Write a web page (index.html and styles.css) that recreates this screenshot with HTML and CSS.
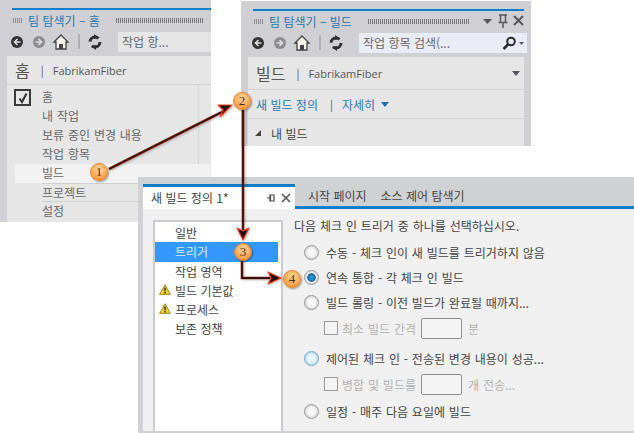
FILE: index.html
```html
<!DOCTYPE html>
<html lang="ko">
<head>
    <meta charset="UTF-8">
    <title>새 빌드 정의</title>
    <link rel="stylesheet" href="styles.css">
</head>
<body>
    <div class="canvas">

        <!-- Team Explorer: home -->
        <div class="panel panel-home">
            <div class="titlebar">
                <span class="grip"></span>
                <span class="title">팀 탐색기 – 홈</span>
                <span class="dots"></span>
            </div>
            <div class="toolbar">
                <svg class="tool-icons" width="92" height="18" viewBox="0 0 92 18">
                    <use href="#tools"/>
                </svg>
                <div class="search">작업 항...</div>
            </div>
            <div class="content">
                <div class="page-head">
                    <span class="page-title">홈</span>
                    <span class="sep">|</span>
                    <span class="project">FabrikamFiber</span>
                </div>
                <div class="nav-wrap">
                    <span class="check-box">
                        <svg width="12" height="12" viewBox="0 0 12 12"><path d="M2.5 6.5 L5 10 L9.5 1.5" fill="none" stroke="#333" stroke-width="2"/></svg>
                    </span>
                    <ul class="nav">
                        <li>홈</li>
                        <li>내 작업</li>
                        <li>보류 중인 변경 내용</li>
                        <li>작업 항목</li>
                        <li class="hot">빌드</li>
                        <li class="ruled">프로젝트</li>
                        <li>설정</li>
                    </ul>
                </div>
            </div>
        </div>

        <!-- Team Explorer: builds -->
        <div class="panel panel-builds">
            <div class="titlebar">
                <span class="grip"></span>
                <span class="title">팀 탐색기 – 빌드</span>
                <span class="dots"></span>
                <svg class="win-icons" width="48" height="14" viewBox="0 0 48 14">
                    <path d="M7 5 H16 L11.5 10 Z" fill="#55565e"/>
                    <path d="M23 1 H31 M24.5 1 V8 M29.5 1 V8 M22.5 8.5 H31.5 M27 8.5 V14" fill="none" stroke="#55565e" stroke-width="1.5"/>
                    <path d="M38 2 L47 11 M47 2 L38 11" fill="none" stroke="#55565e" stroke-width="2"/>
                </svg>
            </div>
            <div class="toolbar">
                <svg class="tool-icons" width="92" height="18" viewBox="0 0 92 18">
                    <use href="#tools"/>
                </svg>
                <div class="search search-wide">
                    <span>작업 항목 검색(...</span>
                    <svg width="22" height="14" viewBox="0 0 22 14">
                        <circle cx="9" cy="5.5" r="3.8" fill="none" stroke="#2c2c2c" stroke-width="2"/>
                        <path d="M6 8.5 L1.5 13" stroke="#2c2c2c" stroke-width="2.6"/>
                        <path d="M17 6 H22 L19.5 9 Z" fill="#55565e"/>
                    </svg>
                </div>
            </div>
            <div class="content">
                <div class="page-head page-head-tall">
                    <span class="page-title">빌드</span>
                    <span class="sep">|</span>
                    <span class="project">FabrikamFiber</span>
                    <span class="caret"></span>
                </div>
                <div class="links">
                    <span class="link">새 빌드 정의</span>
                    <span class="sep">|</span>
                    <span class="link">자세히</span>
                    <span class="caret caret-blue"></span>
                </div>
                <div class="section-head">
                    <span class="corner"></span>
                    <span>내 빌드</span>
                </div>
            </div>
        </div>

        <!-- build definition editor -->
        <div class="editor">
            <div class="tabs">
                <div class="tab tab-active">
                    <span class="tab-name">새 빌드 정의 1*</span>
                    <svg width="26" height="12" viewBox="0 0 26 12">
                        <path d="M2 6 H5 M5 3 H9 V9 H5 Z M5.5 3 V9" fill="none" stroke="#444" stroke-width="1.2"/>
                        <path d="M17 2 L25 10 M25 2 L17 10" fill="none" stroke="#555" stroke-width="1.6"/>
                    </svg>
                </div>
                <div class="tab">시작 페이지</div>
                <div class="tab">소스 제어 탐색기</div>
            </div>
            <div class="editor-body">
                <ul class="steps">
                    <li>일반</li>
                    <li class="selected">트리거</li>
                    <li>작업 영역</li>
                    <li><svg class="warn" width="12" height="11" viewBox="0 0 12 11"><use href="#warn"/></svg>빌드 기본값</li>
                    <li><svg class="warn" width="12" height="11" viewBox="0 0 12 11"><use href="#warn"/></svg>프로세스</li>
                    <li>보존 정책</li>
                </ul>
                <div class="triggers">
                    <p class="lead">다음 체크 인 트리거 중 하나를 선택하십시오.</p>
                    <div class="option"><span class="radio"></span>수동 - 체크 인이 새 빌드를 트리거하지 않음</div>
                    <div class="option"><span class="radio radio-on"></span>연속 통합 - 각 체크 인 빌드</div>
                    <div class="option"><span class="radio"></span>빌드 롤링 - 이전 빌드가 완료될 때까지...</div>
                    <div class="sub"><span class="box"></span><span class="sub-label">최소 빌드 간격</span><span class="field"></span>분</div>
                    <div class="option option-gap"><span class="radio radio-hover"></span>제어된 체크 인 - 전송된 변경 내용이 성공...</div>
                    <div class="sub"><span class="box"></span><span class="sub-label">병합 및 빌드를</span><span class="field"></span>개 전송...</div>
                    <div class="option option-last"><span class="radio"></span>일정 - 매주 다음 요일에 빌드</div>
                </div>
            </div>
        </div>

        <!-- callout arrows -->
        <svg class="arrows" width="634" height="433" viewBox="0 0 634 433">
            <defs>
                <g id="tools">
                    <circle cx="7" cy="9" r="6" fill="#333"/>
                    <path d="M10.5 9 H5 M7.5 6 L4.5 9 L7.5 12" fill="none" stroke="#e0e0e4" stroke-width="1.6"/>
                    <circle cx="29" cy="9" r="6" fill="#8c8c90"/>
                    <path d="M25.5 9 H31 M28.5 6 L31.5 9 L28.5 12" fill="none" stroke="#e0e0e4" stroke-width="1.6"/>
                    <path d="M44 9 L51 2 L58 9 H56 V16 H46 V9 Z" fill="#f3f1ea" stroke="#444" stroke-width="1.3"/>
                    <rect x="49" y="11" width="4" height="5" fill="#444"/>
                    <path d="M69 1 V16" stroke="#9b9ba0" stroke-width="1.2"/>
                    <circle cx="85" cy="9" r="5" fill="none" stroke="#2e2e33" stroke-width="3" stroke-dasharray="11 4.7"/>
                    <path d="M84 1 L88 4 L84 6 Z M86 17 L82 14 L86 12 Z" fill="#2e2e33"/>
                </g>
                <g id="warn">
                    <path d="M6 .8 L11.4 10.4 H.6 Z" fill="#f6d332" stroke="#8a7414" stroke-width=".8"/>
                    <path d="M6 3.4 V7.2 M6 8 V9.4" stroke="#222" stroke-width="1.4"/>
                </g>
                <filter id="soft" x="-10%" y="-10%" width="120%" height="120%">
                    <feDropShadow dx="1" dy="1" stdDeviation="1" flood-color="#000" flood-opacity=".25"/>
                </filter>
            </defs>
            <g filter="url(#soft)">
                <path class="line-red" d="M109 169 L224 111"/>
                <path class="line-dark" d="M109 169 L224 111"/>
                <path class="head" d="M232 105 L218 105 L223 110 L220 117 Z"/>
                <path class="line-red" d="M243 110 V230"/>
                <path class="line-dark" d="M243 110 V230"/>
                <path class="head" d="M243 240 L237 228 L243 231 L249 228 Z"/>
                <path class="line-red" d="M242 258 V278 H270"/>
                <path class="line-dark" d="M242 258 V278 H270"/>
                <path class="head" d="M281 278 L268 272 L271 278 L268 284 Z"/>
            </g>
        </svg>

        <span class="badge badge-1">1</span>
        <span class="badge badge-2">2</span>
        <span class="badge badge-3">3</span>
        <span class="badge badge-4">4</span>
    </div>
</body>
</html>
```

FILE: styles.css
```css
/* Global Styles */
* {
    margin: 0;
    padding: 0;
    box-sizing: border-box;
}

body {
    background: #ffffff;
    font-family: 'Noto Sans CJK KR', 'Noto Sans', sans-serif;
    font-size: 12px;
    color: #444;
}

ul {
    list-style: none;
}

.canvas {
    position: relative;
    width: 634px;
    height: 433px;
    overflow: hidden;
}

/* Team Explorer panels */
.panel {
    position: absolute;
    background-color: #d0cfd3;
    padding-left: 7px;
    overflow: hidden;
}

.panel-home {
    left: 0;
    top: 0;
    width: 211px;
    height: 222px;
    padding-top: 8px;
}

.panel-builds {
    left: 241px;
    top: 1px;
    width: 290px;
    height: 145px;
    padding-top: 8px;
    padding-right: 7px;
}

.titlebar {
    display: flex;
    align-items: center;
    height: 22px;
    margin-left: 5px;
    border-top: 2px solid #0f7dc8;
}

.grip {
    width: 10px;
    height: 5px;
    margin-left: 1px;
    margin-right: 5px;
    background: repeating-linear-gradient(to right, #8d8d96 0 1px, transparent 1px 2px);
}

.title {
    color: #2a78ae;
    font-size: 12px;
    white-space: nowrap;
}

.dots {
    flex: 1;
    height: 5px;
    margin-left: 16px;
    margin-right: 7px;
    background: repeating-linear-gradient(to right, #77777f 0 1px, transparent 1px 2px);
}

.win-icons {
    flex: none;
}

.toolbar {
    display: flex;
    align-items: center;
    height: 21px;
    margin-top: 1px;
    margin-bottom: 4px;
}

.tool-icons {
    flex: none;
    margin-left: 3px;
    margin-right: 16px;
}

.search {
    flex: 1;
    height: 20px;
    line-height: 20px;
    padding-left: 4px;
    background-color: #e5e5e6;
    color: #666;
}

.search-wide {
    display: flex;
    flex: none;
    width: 168px;
    justify-content: space-between;
    align-items: center;
    padding-right: 3px;
    background-color: #e9ebf5;
}

.content {
    background-color: #e6e6e6;
}

.panel-home .content {
    height: 167px;
}

.panel-builds .content {
    height: 90px;
}

/* Page headers */
.page-head {
    display: flex;
    align-items: center;
    height: 29px;
    padding-left: 8px;
    border-bottom: 1px solid #d0d0d0;
}

.page-head-tall {
    height: 33px;
    padding-right: 4px;
}

.page-title {
    font-size: 16px;
    color: #555;
}

.sep {
    margin-left: 11px;
    margin-right: 9px;
    color: #555;
    font-size: 11px;
}

.project {
    flex: 1;
    font-family: 'Open Sans', sans-serif;
    font-size: 11px;
    color: #555;
}

.caret {
    width: 0;
    height: 0;
    border-left: 4px solid transparent;
    border-right: 4px solid transparent;
    border-top: 5px solid #55565e;
}

.caret-blue {
    margin-left: 6px;
    border-top-color: #1d6fa8;
}

.links {
    display: flex;
    align-items: center;
    height: 29px;
    padding-left: 8px;
    border-bottom: 1px solid #d0d0d0;
}

.links .sep {
    margin-left: 12px;
}

.link {
    color: #2a78ae;
}

.section-head {
    display: flex;
    align-items: center;
    height: 28px;
    padding-left: 7px;
    color: #444;
}

.corner {
    width: 0;
    height: 0;
    margin-right: 10px;
    border-left: 6px solid transparent;
    border-bottom: 6px solid #444;
}

/* Home navigation */
.nav-wrap {
    display: flex;
    height: 138px;
}

.check-box {
    display: flex;
    flex: none;
    justify-content: center;
    align-items: center;
    width: 17px;
    height: 17px;
    margin-top: 4px;
    margin-left: 7px;
    border: 2px solid #3a3a3a;
}

.nav {
    flex: 1;
    margin-left: 11px;
    padding-top: 3px;
    margin-right: 12px;
    border-right: 1px solid #d6d6d6;
}

.nav li {
    height: 19px;
    line-height: 17px;
    color: #666;
    word-spacing: 0.5px;
    white-space: nowrap;
}

.nav .hot {
    margin-left: -27px;
    margin-right: -12px;
    padding-left: 27px;
    background-color: #f2f2f2;
}

.nav .ruled {
    border-top: 1px solid #d0d0d0;
    border-bottom: 1px solid #d0d0d0;
}

/* Editor window */
.editor {
    position: absolute;
    left: 138px;
    top: 177px;
    width: 496px;
    height: 256px;
    padding-left: 5px;
    background-color: #d0d1d3;
}

.tabs {
    display: flex;
    height: 32px;
    padding-top: 7px;
    border-bottom: 3px solid #0f7dc8;
}

.tab {
    height: 22px;
    line-height: 24px;
    margin-right: 14px;
    color: #444;
    white-space: nowrap;
}

.tab-active {
    display: flex;
    justify-content: space-between;
    align-items: center;
    width: 152px;
    height: 25px;
    margin-right: 13px;
    padding-left: 8px;
    padding-right: 4px;
    border-top: 3px solid #0f7dc8;
    background-color: #ffffff;
}

.editor-body {
    display: flex;
    height: 222px;
    padding-top: 11px;
    padding-left: 10px;
    background-color: #f0f0f0;
}

.steps {
    flex: none;
    width: 130px;
    height: 211px;
    padding-top: 1px;
    padding-right: 3px;
    border: 2px solid #c9cbd0;
    border-bottom: none;
    background-color: #ffffff;
    color: #444;
}

.steps li {
    position: relative;
    height: 19px;
    line-height: 19px;
    padding-left: 20px;
}

.steps .selected {
    height: 20px;
    background-color: #3399ff;
    color: #d8ecff;
}

.warn {
    position: absolute;
    left: 4px;
    top: 3px;
}

.triggers {
    flex: 1;
    padding-left: 11px;
    color: #444;
}

.lead {
    height: 14px;
    line-height: 14px;
    margin-top: -1px;
    margin-bottom: 7px;
    word-spacing: 0.5px;
    white-space: nowrap;
}

.option {
    display: flex;
    align-items: center;
    height: 25px;
    padding-left: 10px;
    word-spacing: 0.5px;
    white-space: nowrap;
}

.option-gap {
    margin-top: 6px;
}

.option-last {
    margin-top: 3px;
}

.radio {
    flex: none;
    width: 15px;
    height: 15px;
    margin-right: 7px;
    border: 1px solid #9a9a9a;
    border-radius: 50%;
    background: radial-gradient(circle, #f7f7f7 0 40%, #d4d4d4 75%);
}

.radio-on {
    background: radial-gradient(circle, #1f8fd0 0 28%, #124f80 42%, #f0f0f0 50%, #d4d4d4 80%);
}

.radio-hover {
    border-color: #6fa8d6;
    background: radial-gradient(circle, #e9f5fd 0 40%, #a8d4f2 80%);
}

.sub {
    display: flex;
    align-items: center;
    height: 24px;
    margin-top: 1px;
    padding-left: 30px;
    color: #b0b0b0;
    word-spacing: 0.5px;
    white-space: nowrap;
}

.box {
    flex: none;
    width: 14px;
    height: 14px;
    margin-right: 4px;
    border: 1px solid #9a9a9a;
    background-color: #f4f4f4;
}

.sub-label {
    width: 79px;
}

.field {
    flex: none;
    width: 41px;
    height: 21px;
    margin-right: 6px;
    border: 1px solid #8e8e8e;
    border-radius: 2px;
    background-color: #f4f4f4;
}

/* Callouts */
.arrows {
    position: absolute;
    left: 0;
    top: 0;
}

.line-red {
    fill: none;
    stroke: #8f2a14;
    stroke-width: 2.6;
}

.line-dark {
    fill: none;
    stroke: #1c0703;
    stroke-width: 1.3;
}

.head {
    fill: #1c0c08;
    stroke: #f0401a;
    stroke-width: 1.2;
    stroke-linejoin: round;
}

.badge {
    position: absolute;
    width: 18px;
    height: 18px;
    line-height: 16px;
    border: 1px solid #e8862a;
    border-radius: 50%;
    background: radial-gradient(circle at 50% 35%, #ffd9a8 0, #fdb060 50%, #ef8420 100%);
    box-shadow: 1px 1px 2px rgba(0, 0, 0, 0.4);
    font-family: 'Liberation Serif', serif;
    font-size: 13px;
    text-align: center;
    color: #4a3010;
}

.badge-1 { left: 90px; top: 163px; }
.badge-2 { left: 233px; top: 92px; }
.badge-3 { left: 234px; top: 243px; }
.badge-4 { left: 283px; top: 270px; }
```
